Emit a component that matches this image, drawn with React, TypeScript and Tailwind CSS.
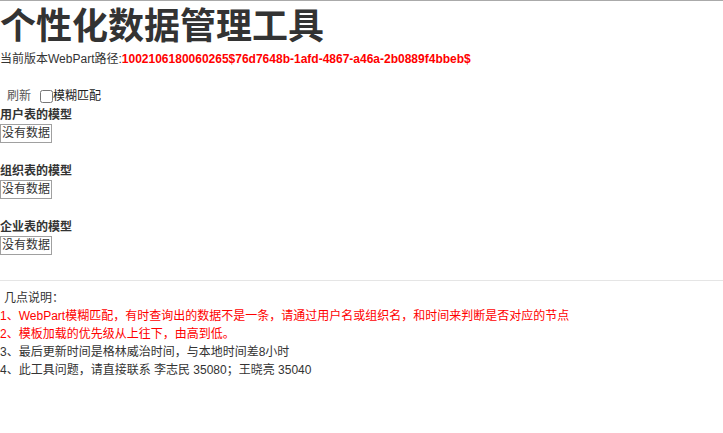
import React from 'react';

const font = { fontFamily: '"Liberation Sans", "Noto Sans CJK SC", sans-serif' };

const models = ['用户表的模型', '组织表的模型', '企业表的模型'];

const notes = [
  { text: '1、WebPart模糊匹配，有时查询出的数据不是一条，请通过用户名或组织名，和时间来判断是否对应的节点', red: true },
  { text: '2、模板加载的优先级从上往下，由高到低。', red: true },
  { text: '3、最后更新时间是格林威治时间，与本地时间差8小时', red: false },
  { text: '4、此工具问题，请直接联系 李志民 35080；王晓亮 35040', red: false },
];

export default function App() {
  return (
    <div className="min-h-[433px] bg-white border-t border-[#aaaaaa] text-[12px] text-[#333333]" style={font}>
      <h1 className="text-[36px] font-bold leading-[40px] mt-[6px]">个性化数据管理工具</h1>
      <div className="leading-[18px] mt-[3px]">
        当前版本WebPart路径:<span className="text-[#ff0000] font-bold">1002106180060265$76d7648b-1afd-4867-a46a-2b0889f4bbeb$</span>
      </div>

      {/* toolbar */}
      <div className="flex items-center mt-[19px] h-[18px]">
        <span className="ml-[7px] text-[#555555]">刷新</span>
        <input type="checkbox" className="ml-[9px] w-[13px] h-[13px] m-0" />
        <span className="text-[#222222]">模糊匹配</span>
      </div>

      {models.map((name) => (
        <div key={name} className="h-[56px] pt-[1px]">
          <div className="font-bold leading-[18px]">{name}</div>
          <button className="border border-[#a0a0a0] bg-white px-[1px] leading-[17px] text-[12px] text-[#333333]">
            没有数据
          </button>
        </div>
      ))}

      <div className="border-t border-[#e5e5e5] mt-[7px] pt-[8px]">
        <div className="ml-[4px] leading-[18px]">几点说明：</div>
        {notes.map((n) => (
          <div key={n.text} className={n.red ? 'leading-[18px] text-[#ff0000]' : 'leading-[18px]'}>
            {n.text}
          </div>
        ))}
      </div>
    </div>
  );
}
